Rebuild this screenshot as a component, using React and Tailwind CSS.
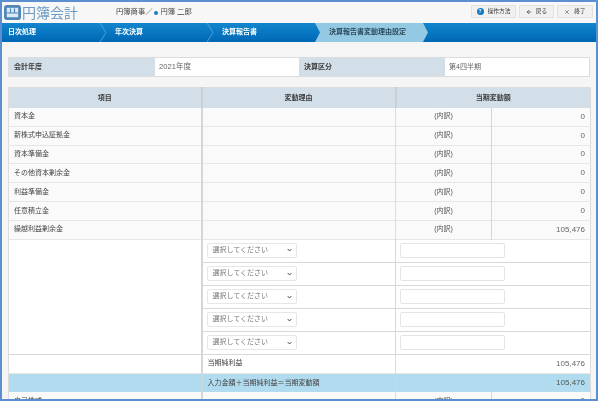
import React from 'react';
import { X, ArrowLeft } from 'lucide-react';

const FONT = 'font-["Liberation_Sans","Noto_Sans_CJK_JP",sans-serif]';

const accountRows = [
  { name: '資本金', amount: '0' },
  { name: '新株式申込証拠金', amount: '0' },
  { name: '資本準備金', amount: '0' },
  { name: 'その他資本剰余金', amount: '0' },
  { name: '利益準備金', amount: '0' },
  { name: '任意積立金', amount: '0' },
  { name: '繰越利益剰余金', amount: '105,476' },
];

const Chevron = ({ color = '#4aa3da' }) => (
  <svg width="9" height="19" viewBox="0 0 9 19" className="absolute top-0 right-0">
    <polyline points="1,0 7,9.5 1,19" fill="none" stroke={color} strokeWidth="1" />
  </svg>
);

const HeaderButton = ({ icon, label, className }) => (
  <div className={`flex h-[13px] items-center justify-center gap-1 rounded-[1px] border border-[#e2e2e2] bg-[#f1f1f1] text-[5.7px] text-[#333] ${className}`}>
    {icon}
    <span>{label}</span>
  </div>
);

const InputRow = () => (
  <tr className="h-[23px] border-b border-[#d8d8d8] bg-white">
    <td className="border-r border-[#d8d8d8] px-1">
      <div className="flex h-[15px] w-[90px] items-center justify-between rounded-[2px] border border-[#e6e6e6] bg-white pr-1 pl-[5px] text-[7px] text-[#777]">
        <span>選択してください</span>
        <svg width="5" height="4" viewBox="0 0 5 4">
          <polyline points="0.7,1 2.5,3 4.3,1" fill="none" stroke="#444" strokeWidth="0.9" />
        </svg>
      </div>
    </td>
    <td colSpan={2} className="px-1">
      <div className="h-[15px] w-[105px] rounded-[2px] border border-[#e4e4e4] bg-white" />
    </td>
  </tr>
);

const App = () => {
  return (
    <div className={`flex h-[401px] w-[598px] flex-col overflow-hidden border-2 border-[#5b8fd0] bg-[#f5f5f5] blur-[0.3px] ${FONT}`}>
      {/* Header */}
      <div className="flex h-[21px] shrink-0 items-center bg-[#f7f7f7] pr-[3px] pl-[2px]">
        <div className="flex h-[15px] w-[17px] items-center justify-center rounded-[3px] bg-[#4f86b8]">
          <svg width="13" height="11" viewBox="0 0 13 11">
            <rect x="0.8" y="0.8" width="11.4" height="9.4" fill="#dce8f2" />
            <path d="M4.5 1.5V6M8.5 1.5V6M1 6H12" fill="none" stroke="#4f86b8" strokeWidth="1.2" />
          </svg>
        </div>
        <span className="ml-[1px] w-[58px] text-[14px] leading-none whitespace-nowrap text-[#6d9ac4]">円簿会計</span>
        <span className="ml-[36px] flex items-center text-[7.3px] text-[#444]">
          円簿商事／<span className="mx-[2px] inline-block h-[4px] w-[4px] rounded-full bg-[#1b7fc4]" />円簿 二郎
        </span>
        <div className="ml-auto -mt-[2px] flex gap-[3px]">
          <HeaderButton
            className="w-[45px]"
            label="操作方法"
            icon={
              <span className="flex h-[7px] w-[7px] items-center justify-center rounded-full bg-[#0f76bd] text-[5px] font-bold text-white">?</span>
            }
          />
          <HeaderButton className="w-[35px]" label="戻る" icon={<ArrowLeft size={6} strokeWidth={3} className="text-[#444]" />} />
          <HeaderButton className="w-[36px]" label="終了" icon={<X size={6} strokeWidth={2.5} className="text-[#555]" />} />
        </div>
      </div>

      {/* Breadcrumb nav */}
      <div className="flex h-[19px] shrink-0 bg-gradient-to-b from-[#1386cd] to-[#0067b5] text-[7px] font-bold text-white">
        <div className="relative flex w-[106px] items-center pl-[6px]">
          日次処理
          <Chevron />
        </div>
        <div className="relative flex w-[107px] items-center pl-[7px]">
          年次決算
          <Chevron />
        </div>
        <div className="flex w-[100px] items-center pl-[7px]">決算報告書</div>
        <div className="flex w-[113px] items-center bg-[#93c9e2] pl-[14px] text-[#2c4a5e] [clip-path:polygon(0_0,108px_0,113px_50%,108px_100%,0_100%,5px_50%)]">
          決算報告書変動理由設定
        </div>
      </div>

      {/* Body */}
      <div className="min-h-0 flex-1 overflow-hidden pt-[15px] pr-[6px] pl-[6px] text-[7px] text-[#444]">
        <div className="flex h-[20px] border border-[#dcdcdc]">
          <div className="flex w-[146px] items-center bg-[#d3dfe8] pl-[5px] font-bold text-[#3a3a3a]">会計年度</div>
          <div className="flex w-[144px] items-center bg-white pl-[4px] text-[7.6px] text-[#666]">2021年度</div>
          <div className="flex w-[146px] items-center bg-[#d3dfe8] pl-[5px] font-bold text-[#3a3a3a]">決算区分</div>
          <div className="flex flex-1 items-center bg-white pl-[4px] text-[#666]">第4四半期</div>
        </div>

        <table className="mt-[10px] w-[582px] table-fixed border-collapse border border-[#dcdcdc]">
          <colgroup>
            <col className="w-[193px]" />
            <col className="w-[194px]" />
            <col className="w-[96px]" />
            <col className="w-[99px]" />
          </colgroup>
          <thead>
            <tr className="h-[20px] bg-[#d3dfe8] font-bold text-[#3a3a3a]">
              <th className="border-r-2 border-[#c9cfd4] text-center">項目</th>
              <th className="border-r-2 border-[#c9cfd4] text-center">変動理由</th>
              <th colSpan={2} className="text-center">当期変動額</th>
            </tr>
          </thead>
          <tbody>
            {accountRows.map((row) => (
              <tr key={row.name} className="h-[18.8px] border-b border-[#e6e6e6] bg-[#fafafa]">
                <td className="border-r-2 border-[#d6d6d6] pl-[5px]">{row.name}</td>
                <td className="border-r border-[#dcdcdc]" />
                <td className="border-r border-[#d6d6d6] text-center text-[#555]">(内訳)</td>
                <td className="pr-[5px] text-right text-[8px] text-[#666]">{row.amount}</td>
              </tr>
            ))}
            <tr className="bg-white">
              <td rowSpan={6} className="border-r-2 border-b border-[#d6d6d6]" />
            </tr>
            <InputRow />
            <InputRow />
            <InputRow />
            <InputRow />
            <InputRow />
            <tr className="h-[19px] border-b border-[#e6e6e6] bg-white">
              <td className="border-r-2 border-[#d6d6d6]" />
              <td className="border-r border-[#dcdcdc] pl-[5px]">当期純利益</td>
              <td colSpan={2} className="pr-[5px] text-right text-[8px] text-[#666]">105,476</td>
            </tr>
            <tr className="h-[19px] bg-[#b1dbee]">
              <td className="border-r-2 border-[#cfd6da]" />
              <td className="border-r border-[#cfd6da] pl-[5px] whitespace-nowrap">入力金額＋当期純利益＝当期変動額</td>
              <td colSpan={2} className="pr-[5px] text-right text-[8px] text-[#555]">105,476</td>
            </tr>
            <tr className="h-[19px] bg-[#fafafa]">
              <td className="border-r-2 border-[#d6d6d6] pl-[5px]">自己株式</td>
              <td className="border-r border-[#dcdcdc]" />
              <td className="border-r border-[#d6d6d6] text-center text-[#555]">(内訳)</td>
              <td className="pr-[5px] text-right text-[8px] text-[#666]">0</td>
            </tr>
          </tbody>
        </table>
      </div>
    </div>
  );
};

export default App;
